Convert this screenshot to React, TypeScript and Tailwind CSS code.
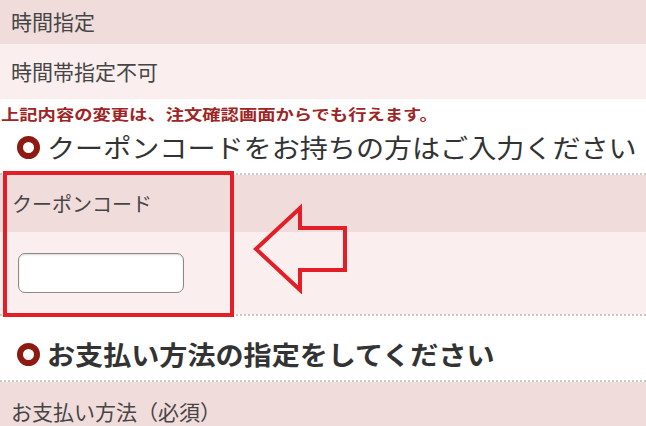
export default function App() {
  return (
    <div className="w-[646px] h-[426px] overflow-hidden bg-white font-['Noto_Sans_CJK_JP',sans-serif]">
      {/* delivery time rows */}
      <div className="h-[44px] flex items-center px-[11px] bg-[#f1dcdc] text-[21px] text-[#454545]">
        時間指定
      </div>
      <div className="h-[55px] flex items-center px-[11px] bg-[#faeeee] text-[21px] text-[#454545]">
        時間帯指定不可
      </div>

      <div className="h-[29px] flex items-center pl-[1px]">
        <span className="inline-block origin-left scale-x-[1.22] text-[15px] font-bold leading-none text-[#9e2525] whitespace-nowrap">
          上記内容の変更は、注文確認画面からでも行えます。
        </span>
      </div>

      <SectionTitle className="h-[45px] pb-[7px]" weight="font-normal">
        クーポンコードをお持ちの方はご入力ください
      </SectionTitle>

      {/* coupon */}
      <div className="relative border-y-2 border-dotted border-[#c9c9c9]">
        <div className="h-[57px] flex items-center px-[12px] bg-[#f1dcdc] text-[20px] text-[#454545]">
          クーポンコード
        </div>
        <div className="h-[82px] bg-[#faeeee] px-[18px] pt-[21px]">
          <input
            type="text"
            className="block w-[166px] h-[40px] rounded-[7px] border border-[#8a8a8a] bg-white shadow-[inset_0_1px_2px_rgba(0,0,0,0.15)]"
          />
        </div>
        <div className="absolute left-[3px] top-[-4px] w-[231px] h-[146px] border-4 border-[#e41e26]" />
        <svg
          className="absolute left-[250px] top-[27px]"
          width="100"
          height="92"
          viewBox="250 200 100 92"
        >
          <polygon
            points="256,247 300,206 300,226 345,226 345,268 300,268 300,288"
            fill="none"
            stroke="#e41e26"
            strokeWidth="4"
            strokeLinejoin="miter"
          />
        </svg>
      </div>

      <SectionTitle className="h-[64px] pt-[12px]" weight="font-bold">
        お支払い方法の指定をしてください
      </SectionTitle>

      <div className="border-t-2 border-dotted border-[#c9c9c9]">
        <div className="h-[60px] px-[11px] pt-[14px] bg-[#f1dcdc] text-[21px] text-[#454545]">
          お支払い方法（必須）
        </div>
      </div>
    </div>
  );
}

function SectionTitle({
  children,
  className,
  weight,
}: {
  children: React.ReactNode;
  className: string;
  weight: string;
}) {
  return (
    <div className={`flex items-center pl-[17px] ${className}`}>
      <span className="shrink-0 w-[23px] h-[23px] rounded-full border-[6px] border-[#8d1b12]" />
      <span
        className={`inline-block ml-[7px] origin-left scale-x-[1.08] text-[26px] leading-none text-[#333] whitespace-nowrap ${weight}`}
      >
        {children}
      </span>
    </div>
  );
}
